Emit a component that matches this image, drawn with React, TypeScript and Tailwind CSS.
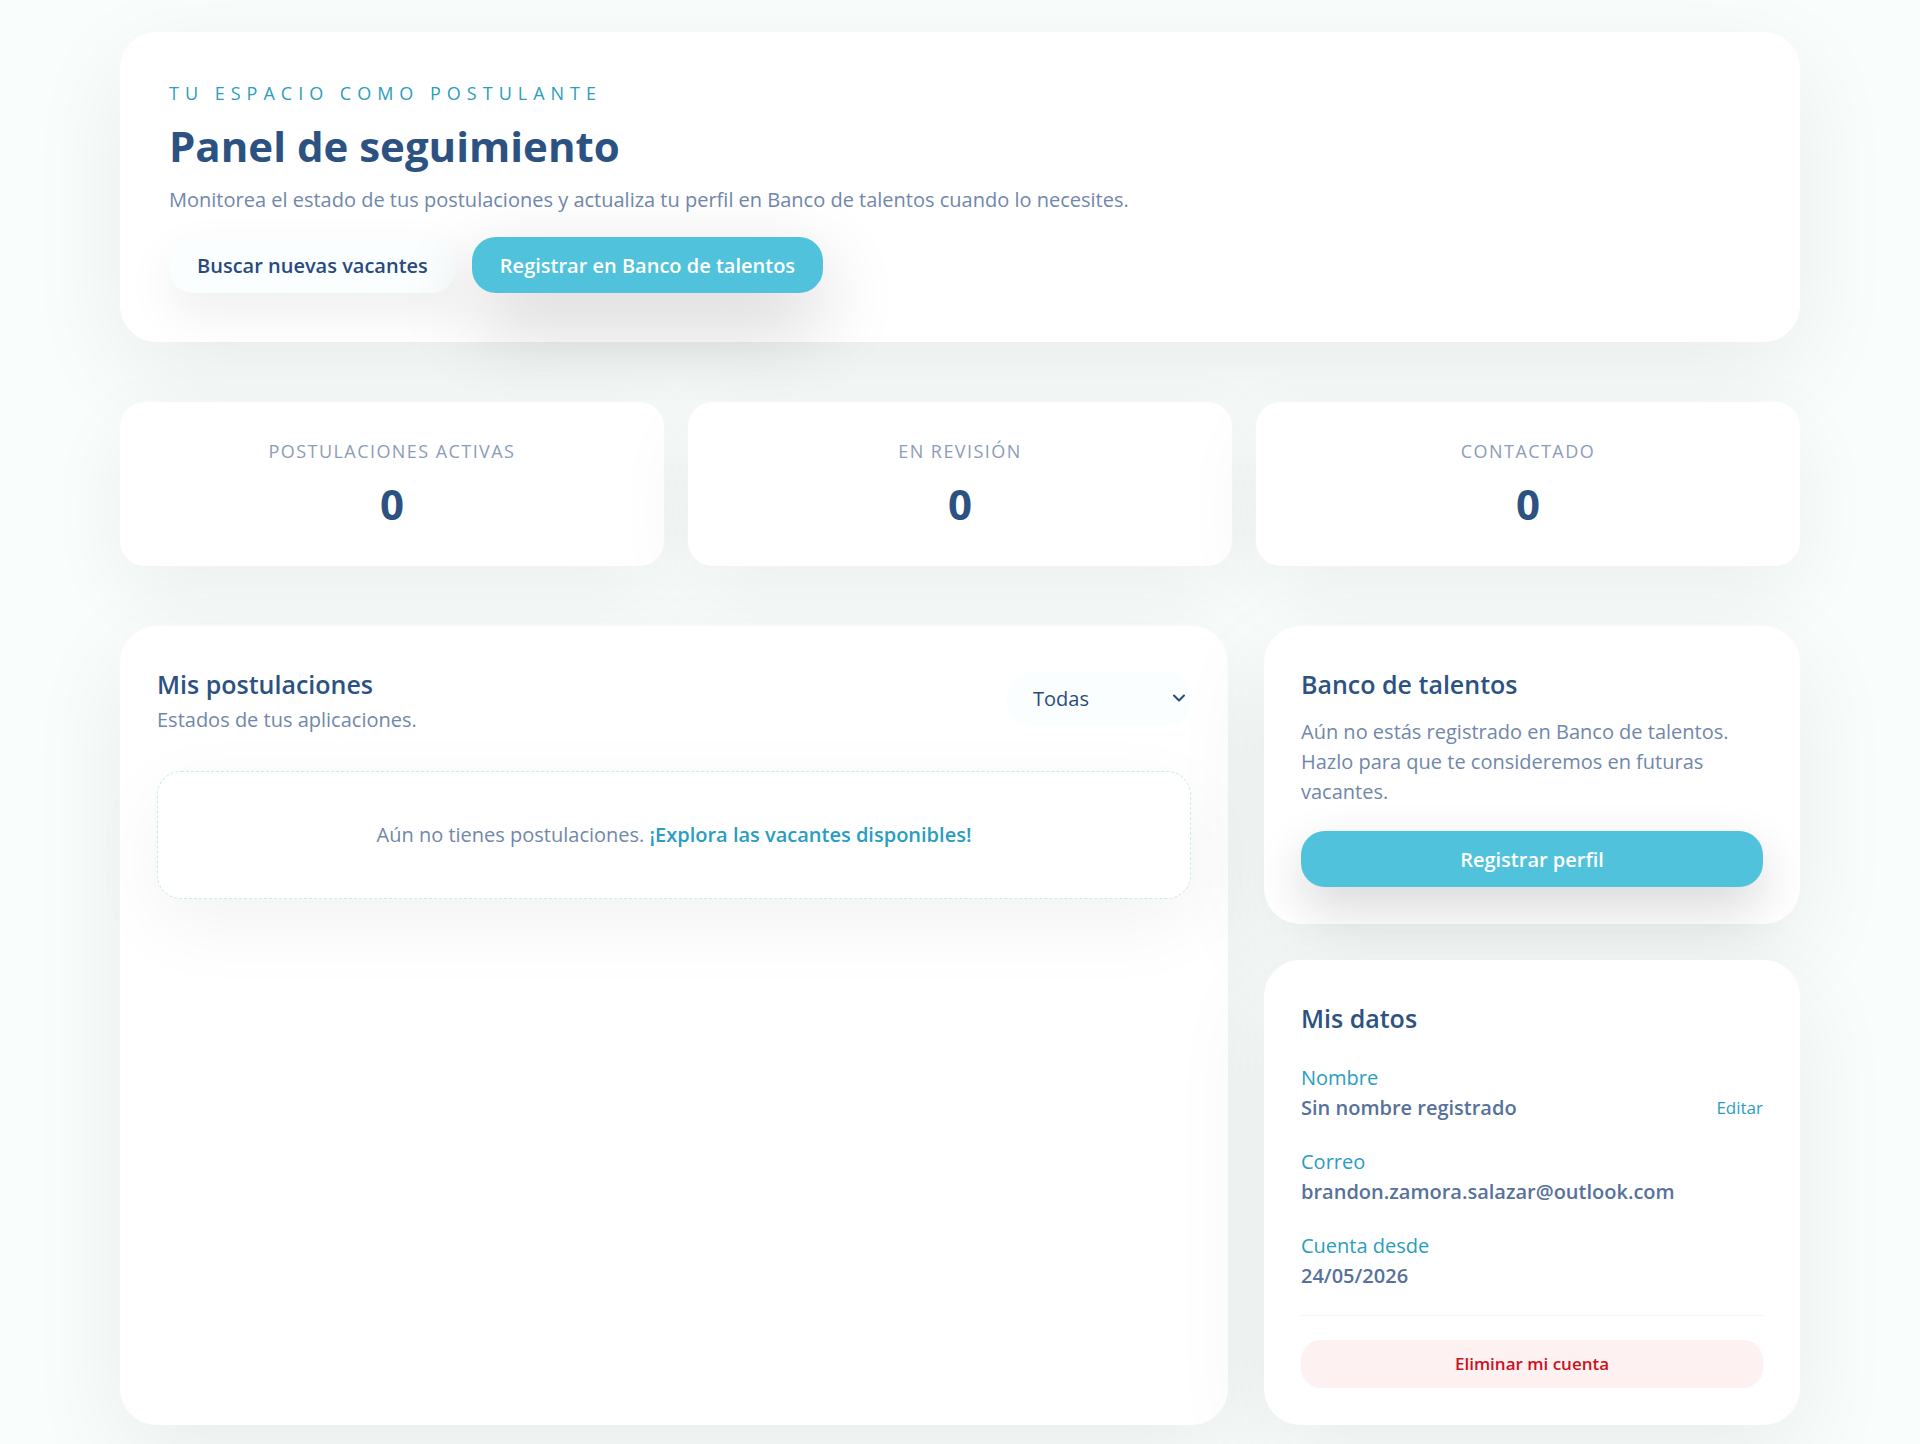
import React, { useState } from 'react';
import { ChevronDown } from 'lucide-react';

const stats = [
  { label: 'Postulaciones activas', value: 0 },
  { label: 'En revisión', value: 0 },
  { label: 'Contactado', value: 0 },
];

const App = () => {
  const [filter, setFilter] = useState('todas');

  return (
    <div className="min-h-screen bg-[#f9fdfc] px-6 pt-8 pb-5 font-['Open_Sans',sans-serif] text-[20px] leading-[30px] text-[#7187ab]">
      <main className="mx-auto max-w-[1680px]">
        <header className="rounded-[36px] border border-white bg-white p-12 shadow-[0_30px_100px_rgba(0,0,0,0.07)]">
          <p className="text-[18px] leading-6 tracking-[6px] uppercase text-[#2a9dc0]">Tu espacio como postulante</p>
          <h1 className="mt-4 text-[42px] leading-[50px] font-bold text-[#2c5282]">Panel de seguimiento</h1>
          <p className="mt-3.5">Monitorea el estado de tus postulaciones y actualiza tu perfil en Banco de talentos cuando lo necesites.</p>
          <div className="mt-[22px] flex flex-wrap gap-4">
            <a href="#vacantes" className="rounded-3xl bg-[#fafefe] px-7 pt-3.5 pb-3 font-semibold text-[#2a4a7f] shadow-[0_20px_50px_rgba(0,0,0,0.07)]">
              Buscar nuevas vacantes
            </a>
            <button type="button" className="rounded-3xl bg-[#50c2db] px-7 pt-3.5 pb-3 font-semibold text-white shadow-[0_30px_80px_rgba(0,0,0,0.2)]">
              Registrar en Banco de talentos
            </button>
          </div>
        </header>

        <section className="mt-15 grid grid-cols-1 gap-6 md:grid-cols-3">
          {stats.map((stat) => (
            <div key={stat.label} className="rounded-3xl border border-white bg-white p-9 text-center shadow-[0_25px_80px_rgba(0,0,0,0.06)]">
              <p className="text-[18px] leading-6 tracking-[0.08em] uppercase text-[#8d9cb8]">{stat.label}</p>
              <p className="mt-4 text-[42px] leading-[50px] font-bold text-[#2c5282]">{stat.value}</p>
            </div>
          ))}
        </section>

        <div className="mt-15 grid grid-cols-1 gap-9 lg:grid-cols-3">
          <section className="rounded-[36px] border border-white bg-white p-9 shadow-[0_30px_100px_rgba(0,0,0,0.07)] lg:col-span-2">
            <div className="flex items-center justify-between gap-4">
              <div>
                <h2 className="text-[25px] leading-[42px] font-semibold text-[#2c5282]">Mis postulaciones</h2>
                <p>Estados de tus aplicaciones.</p>
              </div>
              <div className="relative">
                <select
                  aria-label="Filtrar postulaciones"
                  value={filter}
                  onChange={(e) => setFilter(e.target.value)}
                  className="w-46 appearance-none rounded-3xl bg-[#fafefe] px-6.5 py-3 text-[#2a4a7f]"
                >
                  <option value="todas">Todas</option>
                  <option value="activas">Activas</option>
                  <option value="revision">En revisión</option>
                  <option value="contactado">Contactado</option>
                </select>
                <ChevronDown className="pointer-events-none absolute top-4 right-0.5 h-5 w-5 text-[#2a4a7f]" strokeWidth={2.4} />
              </div>
            </div>

            <div className="mt-9 rounded-3xl border border-dashed border-[#c9ece6] bg-white p-12 text-center shadow-[0_25px_80px_rgba(0,0,0,0.05)]">
              Aún no tienes postulaciones.{' '}
              <a href="#vacantes" className="font-semibold text-[#2a9dc0]">¡Explora las vacantes disponibles!</a>
            </div>
          </section>

          <aside className="flex flex-col gap-9">
            <section className="rounded-[36px] border border-white bg-white p-9 shadow-[0_30px_100px_rgba(0,0,0,0.07)]">
              <h2 className="text-[25px] leading-[42px] font-semibold text-[#2c5282]">Banco de talentos</h2>
              <p className="mt-3">Aún no estás registrado en Banco de talentos. Hazlo para que te consideremos en futuras vacantes.</p>
              <button type="button" className="mt-6 w-full rounded-3xl bg-[#50c2db] pt-3.5 pb-3 font-semibold text-white shadow-[0_20px_50px_rgba(0,0,0,0.16)]">
                Registrar perfil
              </button>
            </section>

            <section className="rounded-[36px] border border-white bg-white p-9 shadow-[0_30px_100px_rgba(0,0,0,0.07)]">
              <h2 className="text-[25px] leading-[42px] font-semibold text-[#2c5282]">Mis datos</h2>
              <dl className="mt-6 flex flex-col gap-6">
                <div>
                  <dt className="text-[#2a9dc0]">Nombre</dt>
                  <dd className="flex items-center justify-between font-semibold text-[#57719c]">
                    Sin nombre registrado
                    <button type="button" className="text-[17px] leading-6 font-normal text-[#2a9dc0]">Editar</button>
                  </dd>
                </div>
                <div>
                  <dt className="text-[#2a9dc0]">Correo</dt>
                  <dd className="font-semibold text-[#57719c]">brandon.zamora.salazar@outlook.com</dd>
                </div>
                <div>
                  <dt className="text-[#2a9dc0]">Cuenta desde</dt>
                  <dd className="font-semibold text-[#57719c]">24/05/2026</dd>
                </div>
              </dl>
              <div className="mt-6 border-t border-[#f1f3f4] pt-6">
                <button type="button" className="w-full rounded-[20px] bg-[#fef1f1] py-3 text-[17px] leading-6 font-semibold text-[#cc1020]">
                  Eliminar mi cuenta
                </button>
              </div>
            </section>
          </aside>
        </div>
      </main>
    </div>
  );
};

export default App;
